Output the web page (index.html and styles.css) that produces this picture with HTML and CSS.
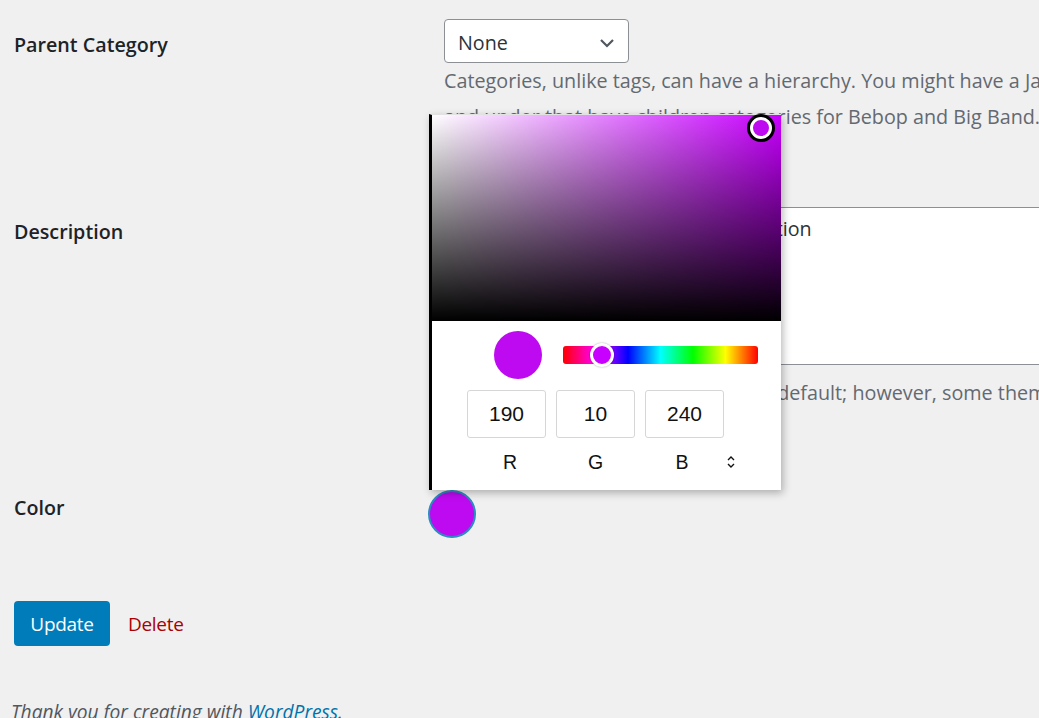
FILE: index.html
```html
<!DOCTYPE html>
<html lang="en">
<head>
<meta charset="utf-8">
<title>Edit Category</title>
<link rel="stylesheet" href="styles.css">
</head>
<body>
<div class="page">
  <div class="form">
    <div class="row row-parent">
      <div class="label">Parent Category</div>
      <div class="field">
        <div class="select">
          <span>None</span>
          <svg class="chev" width="16" height="10" viewBox="0 0 16 10"><path d="M2 2 L8 8 L14 2" fill="none" stroke="#50575e" stroke-width="2.2"/></svg>
        </div>
        <p class="help">Categories, unlike tags, can have a hierarchy. You might have a Jazz category,<br>and under that have children categories for Bebop and Big Band. Totally optional.</p>
      </div>
    </div>
    <div class="row row-desc">
      <div class="label">Description</div>
      <div class="field">
        <div class="textarea">A sample category with a description</div>
        <p class="help">The description is not prominent by default; however, some themes may show it.</p>
      </div>
    </div>
    <div class="row row-color">
      <div class="label">Color</div>
      <div class="field">
        <div class="swatch"></div>
      </div>
    </div>
  </div>
  <div class="actions">
    <button class="btn-primary">Update</button>
    <a class="delete" href="#">Delete</a>
  </div>
  <p class="footer">Thank you for creating with <a href="#">WordPress</a>.</p>

  <div class="picker">
    <div class="sat">
      <div class="sat-handle"></div>
    </div>
    <div class="controls">
      <div class="ctl-top">
        <div class="preview"></div>
        <div class="hue"><div class="hue-knob"></div></div>
      </div>
      <div class="ctl-inputs">
        <div class="num">190</div>
        <div class="num">10</div>
        <div class="num">240</div>
      </div>
      <div class="ctl-labels">
        <span class="chan chan-r">R</span>
        <span class="chan">G</span>
        <span class="chan chan-b">B</span>
        <svg class="toggle" width="10" height="14" viewBox="0 0 10 14"><path d="M2 5 L5 2 L8 5 M2 9 L5 12 L8 9" fill="none" stroke="#111" stroke-width="1.4"/></svg>
      </div>
    </div>
  </div>
</div>
</body>
</html>
```

FILE: styles.css
```css
html, body {
  margin: 0;
  padding: 0;
  background: #f0f0f1;
  overflow: hidden;
}
body {
  width: 1039px;
  height: 718px;
  font-family: "Open Sans", "Noto Sans", sans-serif;
  color: #1d2327;
}
.page {
  position: relative;
  width: 1039px;
  height: 718px;
  padding: 19px 0 0 14px;
  box-sizing: border-box;
}
.form {
  width: 1500px;
}
.row {
  display: grid;
  grid-template-columns: 430px 1fr;
}
.label {
  font-size: 19.7px;
  font-weight: 600;
  line-height: 26px;
  color: #1d2327;
}
.row-parent .label { margin-top: 13px; }
.row-desc { margin-top: 72px; }
.row-desc .label { margin-top: 12px; }
.row-color { margin-top: 79px; }
.row-color .label { margin-top: 5px; }

.select {
  width: 185px;
  height: 44px;
  box-sizing: border-box;
  border: 1px solid #8c8f94;
  border-radius: 4px;
  background: #fff;
  display: flex;
  align-items: center;
  justify-content: space-between;
  padding: 3px 13px 0 13px;
  font-size: 19.7px;
  color: #2c3338;
}

.help {
  margin: 0;
  font-size: 19.75px;
  line-height: 36px;
  color: #646970;
  white-space: nowrap;
}
.row-desc .help { margin-top: 10px; }

.textarea {
  width: 900px;
  height: 158px;
  box-sizing: border-box;
  border: 1px solid #8c8f94;
  background: #fff;
  padding: 8px 12px 8px 30px;
  font-size: 19.7px;
  line-height: 26px;
  color: #2c3338;
}

.swatch {
  width: 48px;
  height: 48px;
  box-sizing: border-box;
  margin-left: -16px;
  border-radius: 50%;
  background: #be0af0;
  border: 2px solid #2a8cc0;
}

.actions {
  margin-top: 63px;
  display: flex;
  align-items: center;
  gap: 18px;
}
.btn-primary {
  width: 96px;
  height: 45px;
  border: 0;
  border-radius: 4px;
  background: #007cba;
  color: #fff;
  font-family: "Open Sans", "Noto Sans", sans-serif;
  font-size: 19px;
  letter-spacing: -0.3px;
  padding: 0;
}
.delete {
  color: #a00;
  text-decoration: none;
  font-size: 19px;
  letter-spacing: -0.3px;
}
.footer {
  margin: 53px 0 0 -3px;
  font-style: italic;
  font-size: 19.2px;
  line-height: 26px;
  color: #50575e;
}
.footer a {
  color: #0073aa;
  text-decoration: none;
}

/* Color picker popup */
.picker {
  position: absolute;
  left: 429px;
  top: 114px;
  width: 352px;
  height: 376px;
  box-sizing: border-box;
  background: #fff;
  border-left: 3px solid #000;
  border-top: 1px solid #e2e2e2;
  box-shadow: 2px 3px 8px rgba(0, 0, 0, 0.28);
  font-family: "Liberation Sans", Arial, sans-serif;
}
.sat {
  position: relative;
  height: 206px;
  background:
    linear-gradient(to top, #000, rgba(0, 0, 0, 0)),
    linear-gradient(to right, #fff, #c800ff);
}
.sat-handle {
  position: absolute;
  left: 318px;
  top: 2px;
  width: 22px;
  height: 22px;
  box-sizing: border-box;
  border-radius: 50%;
  background: #be0af0;
  border: 3px solid #fff;
  box-shadow: 0 0 0 3px #000;
}
.controls {
  padding-top: 10px;
}
.ctl-top {
  display: flex;
  align-items: center;
  padding-left: 62px;
  gap: 21px;
}
.preview {
  width: 48px;
  height: 48px;
  border-radius: 50%;
  background: #be0af0;
}
.hue {
  position: relative;
  width: 195px;
  height: 18px;
  border-radius: 3px;
  background: linear-gradient(to right, #f00 0%, #f0f 16.66%, #00f 33.33%, #0ff 50%, #0f0 66.66%, #ff0 83.33%, #f00 100%);
}
.hue-knob {
  position: absolute;
  left: 27px;
  top: -3px;
  width: 24px;
  height: 24px;
  box-sizing: border-box;
  border-radius: 50%;
  background: #c800ff;
  border: 3px solid #fff;
  box-shadow: 0 0 2px rgba(0, 0, 0, 0.35);
}
.ctl-inputs {
  display: flex;
  gap: 10px;
  padding-left: 35px;
  margin-top: 11px;
}
.num {
  width: 79px;
  height: 48px;
  box-sizing: border-box;
  border: 1px solid #d6d6d6;
  border-radius: 3px;
  display: flex;
  align-items: center;
  justify-content: center;
  font-size: 21px;
  color: #111;
}
.ctl-labels {
  display: flex;
  align-items: center;
  gap: 10px;
  padding-left: 35px;
  margin-top: 14px;
  height: 20px;
}
.chan {
  width: 79px;
  text-align: center;
  font-size: 19.5px;
  color: #111;
}
.chan-r { padding-left: 7px; box-sizing: border-box; }
.chan-b { padding-right: 5px; box-sizing: border-box; }
.toggle {
  margin-left: -8px;
}
```
